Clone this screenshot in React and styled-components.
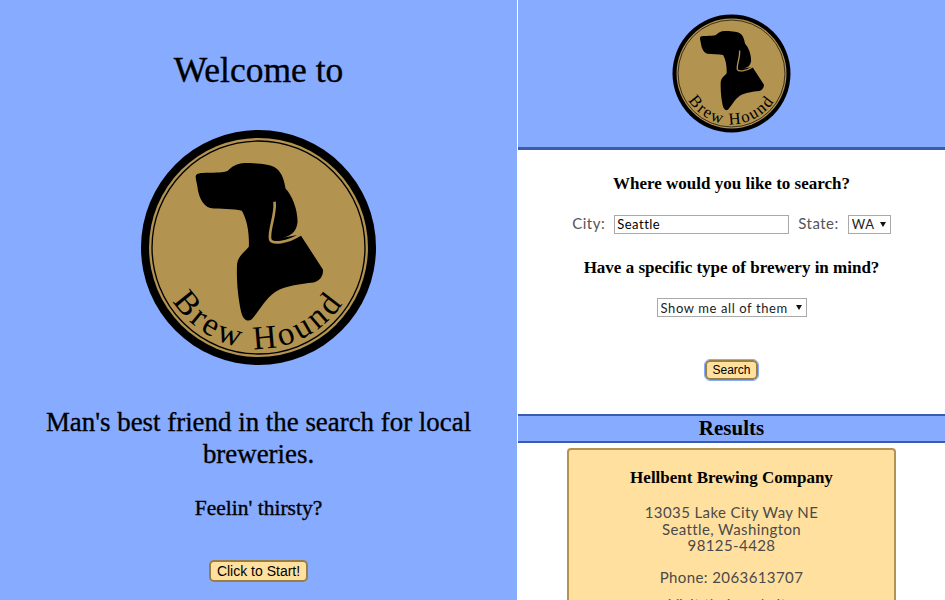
import styled, { createGlobalStyle } from "styled-components";

const GlobalStyle = createGlobalStyle`
    html, body {
        margin: 0;
        padding: 0;
        background: #ffffff;
    }
`;

// Logo redondo, desenhado num viewBox tirado do recorte ampliado
function Logo({ size }) {
    return (
        <svg width={size} height={size} viewBox="30 27 710 710">
            <circle cx="385" cy="382" r="352" fill="#000000" />
            <circle cx="385" cy="382" r="328" fill="#B29350" />
            <circle cx="385" cy="382" r="319" fill="none" stroke="#000000" strokeWidth="4" />
            <path
                d="M197 168 C198 160 210 158 235 158 C255 158 280 158 292 153 C305 140 320 129 345 129 C375 129 415 132 432 141 C450 151 460 170 466 205 C485 225 502 265 502 305 C500 335 480 352 445 355 L510 343 L578 448 C580 465 570 482 550 487 C510 492 470 495 435 515 C405 535 385 575 365 597 C350 607 338 595 333 575 C324 535 318 480 321 430 C325 405 345 395 356 380 C358 345 352 300 335 272 C310 265 270 268 240 264 C215 255 205 225 202 200 C200 185 196 178 197 168 Z"
                fill="#000000"
            />
            <path
                d="M433 245 C438 285 414 330 420 358 C425 372 470 370 511 343"
                fill="none"
                stroke="#B29350"
                strokeWidth="8"
            />
            <path id={`arco-${size}`} d="M82 382 A303 303 0 0 0 688 382" fill="none" />
            <text fontFamily="'Liberation Serif', serif" fontSize="100" letterSpacing="10" fill="#000000" textAnchor="middle">
                <textPath href={`#arco-${size}`} startOffset="50%">Brew Hound</textPath>
            </text>
        </svg>
    );
}

export default function App() {
    return (
        <>
            <GlobalStyle />
            <Page>
                <Welcome>
                    <Title>Welcome to</Title>
                    <WelcomeLogo>
                        <Logo size={237} />
                    </WelcomeLogo>
                    <Tagline>Man's best friend in the search for local breweries.</Tagline>
                    <Thirsty>Feelin' thirsty?</Thirsty>
                    <StartButton>Click to Start!</StartButton>
                </Welcome>
                <Main>
                    <Header>
                        <Logo size={119} />
                    </Header>
                    <SearchForm>
                        <Question>Where would you like to search?</Question>
                        <FieldRow>
                            <FieldLabel>City:</FieldLabel>
                            <CityInput defaultValue="Seattle" />
                            <FieldLabel>State:</FieldLabel>
                            <SelectBox>
                                <Select $width={43} defaultValue="WA">
                                    <option>WA</option>
                                </Select>
                            </SelectBox>
                        </FieldRow>
                        <Question>Have a specific type of brewery in mind?</Question>
                        <TypeRow>
                            <SelectBox>
                                <Select $width={150} defaultValue="all">
                                    <option value="all">Show me all of them</option>
                                </Select>
                            </SelectBox>
                        </TypeRow>
                        <SearchButton>Search</SearchButton>
                    </SearchForm>
                    <ResultsBar>Results</ResultsBar>
                    <Card>
                        <CardName>Hellbent Brewing Company</CardName>
                        <CardText>
                            13035 Lake City Way NE
                            <br />
                            Seattle, Washington
                            <br />
                            98125-4428
                        </CardText>
                        <CardPhone>Phone: 2063613707</CardPhone>
                        <CardLink href="#">Visit their website</CardLink>
                    </Card>
                </Main>
            </Page>
        </>
    );
}

const Page = styled.div`
    display: grid;
    grid-template-columns: 517px 427px;
    gap: 1px;
    height: 600px;
    overflow: hidden;
    background: #ffffff;
`;

const Welcome = styled.section`
    background-color: #86ABFF;
    display: flex;
    flex-direction: column;
    align-items: center;
    height: 600px;
    color: #000000;
    font-family: "Liberation Serif", serif;
    -webkit-text-stroke: 0.35px #000000;
`;

const Title = styled.h1`
    font-size: 35.5px;
    font-weight: 400;
    line-height: 44px;
    margin: 48px 0 0;
`;

const WelcomeLogo = styled.div`
    margin-top: 37px;
    height: 237px;
`;

const Tagline = styled.h2`
    width: 440px;
    font-size: 26.9px;
    font-weight: 400;
    line-height: 32px;
    text-align: center;
    margin: 40px 0 0;
`;

const Thirsty = styled.h3`
    font-size: 21.5px;
    font-weight: 400;
    line-height: 26px;
    margin: 25px 0 0;
`;

const Button = styled.button`
    background-color: #FFE09F;
    border: 2px solid #9A7F45;
    border-radius: 5px;
    color: #000000;
    font-family: "Liberation Sans", sans-serif;
    font-size: 14px;
    padding: 0;
    cursor: pointer;
    -webkit-text-stroke: 0;
`;

const StartButton = styled(Button)`
    width: 99px;
    height: 22px;
    margin-top: 39px;
`;

const Main = styled.section`
    display: flex;
    flex-direction: column;
    align-items: stretch;
    height: 600px;
    overflow: hidden;
`;

const Header = styled.header`
    background-color: #86ABFF;
    border-bottom: 3px solid #3A5CB0;
    height: 150px;
    flex: none;
    box-sizing: border-box;
    padding-top: 14px;
    display: flex;
    justify-content: center;
`;

const SearchForm = styled.form`
    display: flex;
    flex-direction: column;
    align-items: center;
    height: 264px;
    flex: none;
    box-sizing: border-box;
    padding-top: 24px;
`;

const Question = styled.h3`
    font-family: "Liberation Serif", serif;
    font-size: 17px;
    font-weight: 700;
    line-height: 20px;
    margin: 0;
    color: #000000;
`;

const FieldRow = styled.div`
    display: flex;
    align-items: center;
    gap: 9px;
    height: 20px;
    margin: 20px 0 24px;
`;

const FieldLabel = styled.label`
    font-family: "Lato", sans-serif;
    font-size: 15px;
    letter-spacing: 0.5px;
    color: #555555;
    margin-top: -3px;
`;

const CityInput = styled.input`
    width: 175px;
    height: 19px;
    box-sizing: border-box;
    border: 1px solid #A9A9A9;
    padding: 1px 2px;
    font-family: "Lato", sans-serif;
    font-size: 13px;
    letter-spacing: 0.5px;
    color: #000000;
`;

// A seta do select é um triângulo por cima da caixa
const SelectBox = styled.div`
    position: relative;
    display: flex;

    &::after {
        content: "";
        position: absolute;
        right: 5px;
        top: 7px;
        border-left: 3px solid transparent;
        border-right: 3px solid transparent;
        border-top: 5px solid #111111;
        pointer-events: none;
    }
`;

const Select = styled.select`
    appearance: none;
    width: ${(props) => props.$width}px;
    height: 19px;
    box-sizing: border-box;
    border: 1px solid #A9A9A9;
    border-radius: 0;
    padding: 0 0 0 3px;
    background: #ffffff;
    font-family: "Lato", sans-serif;
    font-size: 13px;
    letter-spacing: 0.6px;
    color: #222222;
`;

const TypeRow = styled.div`
    margin-top: 20px;
    height: 19px;
    display: flex;
`;

const SearchButton = styled(Button)`
    width: 53px;
    height: 20px;
    margin-top: 43px;
    font-size: 12px;
    outline: 1px solid #86ABFF;
    outline-offset: 0;
`;

const ResultsBar = styled.h2`
    margin: 0;
    flex: none;
    box-sizing: border-box;
    height: 29px;
    background-color: #86ABFF;
    border-top: 2px solid #3A5CB0;
    border-bottom: 2px solid #3A5CB0;
    font-family: "Liberation Serif", serif;
    font-size: 21px;
    font-weight: 700;
    line-height: 25px;
    text-align: center;
    color: #000000;
`;

const Card = styled.article`
    width: 329px;
    flex: none;
    box-sizing: border-box;
    align-self: center;
    margin-top: 5px;
    padding: 18px 0 0;
    background-color: #FFE09F;
    border: 2px solid #B29350;
    border-radius: 4px;
    text-align: center;
    font-family: "Lato", sans-serif;
    font-size: 15px;
    letter-spacing: 0.4px;
    line-height: 16.7px;
    color: #4A4A4A;
`;

const CardName = styled.h3`
    font-family: "Liberation Serif", serif;
    font-size: 17px;
    font-weight: 700;
    letter-spacing: 0;
    line-height: 20px;
    color: #000000;
    margin: 0 0 16px;
`;

const CardText = styled.p`
    margin: 0 0 15px;
`;

const CardPhone = styled.p`
    margin: 0 0 10px;
`;

const CardLink = styled.a`
    display: block;
    color: #3A5CB0;
    text-decoration: none;
    padding-bottom: 16px;
`;
